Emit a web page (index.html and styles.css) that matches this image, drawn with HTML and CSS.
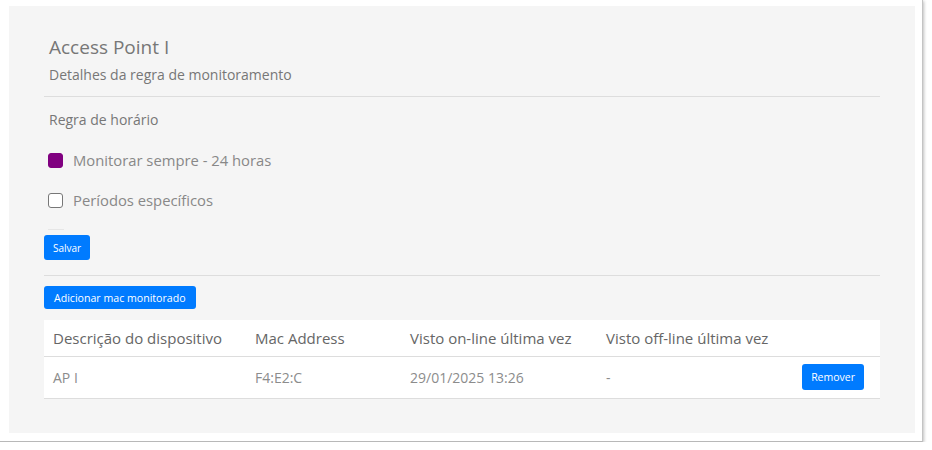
FILE: index.html
```html
<!DOCTYPE html>
<html lang="pt-BR">
<head>
<meta charset="utf-8">
<title>Access Point I</title>
<link rel="stylesheet" href="styles.css">
</head>
<body>
<div class="card">
  <div class="panel">
    <div class="head">
      <h1 class="title">Access Point I</h1>
      <p class="subtitle">Detalhes da regra de monitoramento</p>
    </div>
    <hr class="sep">
    <p class="section">Regra de horário</p>
    <label class="check"><span class="box box-on"></span><span class="lbl">Monitorar sempre - 24 horas</span></label>
    <label class="check"><span class="box"></span><span class="lbl">Períodos específicos</span></label>
    <div class="faint"></div>
    <button class="btn btn-save">Salvar</button>
    <hr class="sep sep2">
    <button class="btn btn-add">Adicionar mac monitorado</button>
    <table class="tbl">
      <thead>
        <tr><th class="c1">Descrição do dispositivo</th><th class="c2">Mac Address</th><th class="c3">Visto on-line última vez</th><th class="c4">Visto off-line última vez</th><th class="c5"></th></tr>
      </thead>
      <tbody>
        <tr><td>AP I</td><td>F4:E2:C</td><td>29/01/2025 13:26</td><td>-</td><td class="act"><button class="btn btn-rm">Remover</button></td></tr>
      </tbody>
    </table>
  </div>
</div>
</body>
</html>
```
FILE: styles.css
```css
* { box-sizing: border-box; }
html, body { margin: 0; padding: 0; background: #fff; }
body { font-family: "Open Sans", "Liberation Sans", sans-serif; color: #777; }
.card {
  width: 923px;
  height: 442px;
  background: #fff;
  padding: 6px 7px 8px 9px;
  border-right: 1px solid #c4c4c4;
  border-bottom: 1px solid #b8b8b8;
  box-shadow: 1px 1px 3px rgba(0,0,0,0.25);
}
.panel {
  background: #f5f5f5;
  height: 427px;
  padding: 29px 35px 0 35px;
}
.head { padding-left: 5px; }
.title { margin: 0; font-size: 19px; font-weight: 400; line-height: 24px; color: #777; }
.subtitle { margin: 7px 0 0; font-size: 14px; line-height: 18px; color: #777; }
.sep { border: 0; border-top: 1px solid #ddd; margin: 12px 0 0; }
.section { margin: 14px 0 0 5px; font-size: 14px; line-height: 18px; color: #777; }
.check { display: flex; align-items: center; margin: 22px 0 0 4px; height: 18px; }
.check + .check { margin-top: 22px; }
.box { width: 15px; height: 15px; border: 1px solid #777; border-radius: 3px; background: #fff; margin-right: 10px; flex: none; }
.box-on { background: #800080; border-color: #800080; }
.lbl { font-size: 14.8px; color: #888; }
.faint { width: 16px; height: 1px; background: #e6e6e6; margin: 20px 0 0 4px; }
.btn {
  display: block;
  font-family: inherit;
  background: #007bff;
  color: #fff;
  border: 0;
  border-radius: 3px;
  font-size: 10px;
  padding: 0 9px;
  height: 25px;
}
.btn-save { margin-top: 5px; }
.sep2 { margin-top: 15px; }
.btn-add { margin-top: 10px; height: 23px; padding: 0 10px; font-size: 10.6px; }
.tbl { width: 100%; margin-top: 11px; border-collapse: collapse; background: #fff; }
.tbl th { text-align: left; font-weight: 400; font-size: 15px; color: #666; height: 36px; padding: 0 9px; border-bottom: 1px solid #ddd; }
.tbl td { font-size: 14px; color: #8c8c8c; height: 42px; padding: 0 9px; border-bottom: 1px solid #ddd; }
.tbl .c1 { width: 202px; }
.tbl .c2 { width: 155px; }
.tbl .c3 { width: 196px; }
.tbl .c4 { width: 190px; }
.tbl .act { text-align: right; padding-right: 16px; }
.btn-rm { display: inline-block; height: 26px; padding: 0 9px; font-size: 10.5px; }
```
